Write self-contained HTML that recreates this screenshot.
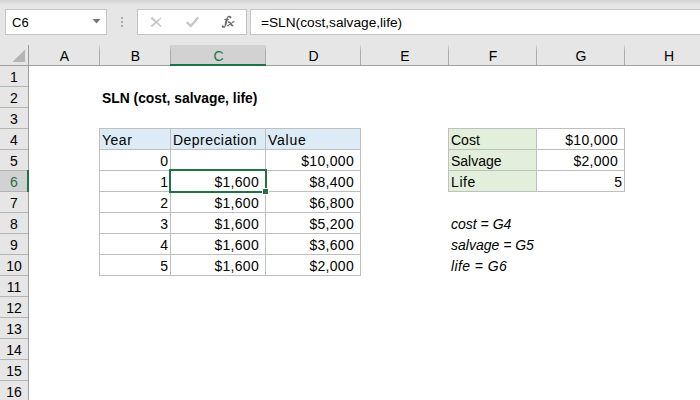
<!DOCTYPE html><html><head><meta charset="utf-8"><style>
*{margin:0;padding:0;box-sizing:border-box}
html,body{width:700px;height:400px;overflow:hidden;background:#fff}
body{position:relative;font-family:"Liberation Sans",sans-serif;font-size:14px;color:#000}
.a{position:absolute}
.t{position:absolute;height:21px;line-height:21px;white-space:nowrap}
.r{text-align:right}
.c{text-align:center}
</style></head><body>

<div class="a" style="left:0;top:0;width:700px;height:45px;background:#e6e6e6"></div>
<div class="a" style="left:0;top:0;width:700px;height:5px;background:linear-gradient(#d3d3d3,#e6e6e6)"></div>
<div class="a" style="left:5px;top:9px;width:102px;height:26px;border:1px solid #c6c6c6;background:#fff"></div>
<div class="t" style="left:12px;top:12px;font-size:13px;color:#000">C6</div>
<svg class="a" style="left:0;top:0" width="700" height="45"><polygon points="92.5,19 100.5,19 96.5,23.5" fill="#757575"/><rect x="121" y="17" width="2" height="2" fill="#a9a9a9"/><rect x="121" y="21" width="2" height="2" fill="#a9a9a9"/><rect x="121" y="25" width="2" height="2" fill="#a9a9a9"/></svg>
<div class="a" style="left:137px;top:9px;width:110px;height:26px;border:1px solid #c6c6c6;background:#fff"></div>
<svg class="a" style="left:0;top:0" width="700" height="45"><polygon points="150.6,18.6 152.2,16.8 161.6,25.9 160.6,27" fill="#c8c8c8"/><polygon points="160.6,17.5 161.4,18.5 152.2,27.1 150.4,25.7" fill="#c8c8c8"/><path d="M186.8 22.2 L190.8 26 L198.2 17.4" stroke="#c8c8c8" stroke-width="2.4" fill="none"/><path d="M230.7 17.3 C230 15.8 227.8 15.8 227.1 18.4 L225.3 25.3 C224.8 27.3 223.4 27.7 222.3 26.5" stroke="#6a6a6a" stroke-width="1.2" fill="none"/><path d="M226.95 18.8 L225.45 24.8" stroke="#6a6a6a" stroke-width="1.8" fill="none"/><circle cx="230.4" cy="17.5" r="1" fill="#6a6a6a"/><circle cx="222.7" cy="26.3" r="1" fill="#6a6a6a"/><path d="M224.3 19.5 L228.9 19.5" stroke="#6a6a6a" stroke-width="1.2"/><path d="M227.9 22.1 C229.4 21.7 230.1 22.4 230.7 23.7 L231.2 24.7 C231.6 25.5 232.4 25.8 233.3 25.3" stroke="#6a6a6a" stroke-width="1.6" fill="none"/><path d="M233.6 21.9 L227.8 25.6 M226.9 25.7 L229 25.7 M232.4 21.8 L234.5 21.8" stroke="#6a6a6a" stroke-width="1" fill="none"/></svg>
<div class="a" style="left:250px;top:9px;width:460px;height:26px;border:1px solid #c6c6c6;background:#fff"></div>
<div class="t" style="left:261px;top:12px;font-size:13.7px;color:#000">=SLN(cost,salvage,life)</div>
<div class="a" style="left:0;top:45px;width:700px;height:20px;background:#e6e6e6"></div>
<div class="a" style="left:170px;top:45px;width:96px;height:21px;background:#d2d2d2"></div>
<svg class="a" style="left:0;top:0" width="700" height="400"><defs><linearGradient id="sg" x1="0" y1="0" x2="0" y2="1"><stop offset="0" stop-color="#d8d8d8"/><stop offset="0.3" stop-color="#ababab"/><stop offset="1" stop-color="#ababab"/></linearGradient></defs><polygon points="25,49.5 25,62 12.5,62" fill="#b5b5b5"/><rect x="99" y="45" width="1" height="20" fill="url(#sg)"/><rect x="170" y="45" width="1" height="20" fill="url(#sg)"/><rect x="265" y="45" width="1" height="20" fill="url(#sg)"/><rect x="360" y="45" width="1" height="20" fill="url(#sg)"/><rect x="448" y="45" width="1" height="20" fill="url(#sg)"/><rect x="536" y="45" width="1" height="20" fill="url(#sg)"/><rect x="624" y="45" width="1" height="20" fill="url(#sg)"/><rect x="0" y="65" width="700" height="1" fill="#9e9e9e"/><rect x="170" y="64" width="96" height="2" fill="#217346"/><rect x="0" y="66" width="28" height="334" fill="#e6e6e6"/><rect x="0" y="170" width="28" height="21" fill="#d2d2d2"/><rect x="28" y="45" width="1" height="355" fill="#9e9e9e"/><rect x="0" y="86" width="28" height="1" fill="#b4b4b4"/><rect x="0" y="107" width="28" height="1" fill="#b4b4b4"/><rect x="0" y="128" width="28" height="1" fill="#b4b4b4"/><rect x="0" y="149" width="28" height="1" fill="#b4b4b4"/><rect x="0" y="170" width="28" height="1" fill="#b4b4b4"/><rect x="0" y="191" width="28" height="1" fill="#b4b4b4"/><rect x="0" y="212" width="28" height="1" fill="#b4b4b4"/><rect x="0" y="233" width="28" height="1" fill="#b4b4b4"/><rect x="0" y="254" width="28" height="1" fill="#b4b4b4"/><rect x="0" y="275" width="28" height="1" fill="#b4b4b4"/><rect x="0" y="296" width="28" height="1" fill="#b4b4b4"/><rect x="0" y="317" width="28" height="1" fill="#b4b4b4"/><rect x="0" y="338" width="28" height="1" fill="#b4b4b4"/><rect x="0" y="359" width="28" height="1" fill="#b4b4b4"/><rect x="0" y="380" width="28" height="1" fill="#b4b4b4"/><rect x="0" y="401" width="28" height="1" fill="#b4b4b4"/><rect x="27" y="170" width="2" height="22" fill="#217346"/></svg>
<div class="t c" style="left:29px;top:46px;width:71px;color:#000">A</div>
<div class="t c" style="left:100px;top:46px;width:71px;color:#000">B</div>
<div class="t c" style="left:171px;top:46px;width:95px;color:#217346">C</div>
<div class="t c" style="left:266px;top:46px;width:95px;color:#000">D</div>
<div class="t c" style="left:361px;top:46px;width:88px;color:#000">E</div>
<div class="t c" style="left:449px;top:46px;width:88px;color:#000">F</div>
<div class="t c" style="left:537px;top:46px;width:88px;color:#000">G</div>
<div class="t c" style="left:625px;top:46px;width:88px;color:#000">H</div>
<div class="t c" style="left:0;top:67px;width:28px;color:#000">1</div>
<div class="t c" style="left:0;top:88px;width:28px;color:#000">2</div>
<div class="t c" style="left:0;top:109px;width:28px;color:#000">3</div>
<div class="t c" style="left:0;top:130px;width:28px;color:#000">4</div>
<div class="t c" style="left:0;top:151px;width:28px;color:#000">5</div>
<div class="t c" style="left:0;top:172px;width:28px;color:#217346">6</div>
<div class="t c" style="left:0;top:193px;width:28px;color:#000">7</div>
<div class="t c" style="left:0;top:214px;width:28px;color:#000">8</div>
<div class="t c" style="left:0;top:235px;width:28px;color:#000">9</div>
<div class="t c" style="left:0;top:256px;width:28px;color:#000">10</div>
<div class="t c" style="left:0;top:277px;width:28px;color:#000">11</div>
<div class="t c" style="left:0;top:298px;width:28px;color:#000">12</div>
<div class="t c" style="left:0;top:319px;width:28px;color:#000">13</div>
<div class="t c" style="left:0;top:340px;width:28px;color:#000">14</div>
<div class="t c" style="left:0;top:361px;width:28px;color:#000">15</div>
<div class="t c" style="left:0;top:382px;width:28px;color:#000">16</div>
<div class="t" style="left:102px;top:88px;font-weight:bold;font-size:13.85px">SLN (cost, salvage, life)</div>
<div class="a" style="left:99px;top:128px;width:262px;height:22px;background:#ddebf7"></div>
<div class="a" style="left:448px;top:128px;width:89px;height:64px;background:#e2efda"></div>
<svg class="a" style="left:0;top:0" width="700" height="400"><rect x="99" y="128" width="1" height="148" fill="#bfbfbf"/><rect x="170" y="128" width="1" height="148" fill="#bfbfbf"/><rect x="265" y="128" width="1" height="148" fill="#bfbfbf"/><rect x="360" y="128" width="1" height="148" fill="#bfbfbf"/><rect x="99" y="128" width="262" height="1" fill="#bfbfbf"/><rect x="99" y="149" width="262" height="1" fill="#bfbfbf"/><rect x="99" y="170" width="262" height="1" fill="#bfbfbf"/><rect x="99" y="191" width="262" height="1" fill="#bfbfbf"/><rect x="99" y="212" width="262" height="1" fill="#bfbfbf"/><rect x="99" y="233" width="262" height="1" fill="#bfbfbf"/><rect x="99" y="254" width="262" height="1" fill="#bfbfbf"/><rect x="99" y="275" width="262" height="1" fill="#bfbfbf"/><rect x="448" y="128" width="1" height="64" fill="#bfbfbf"/><rect x="536" y="128" width="1" height="64" fill="#bfbfbf"/><rect x="624" y="128" width="1" height="64" fill="#bfbfbf"/><rect x="448" y="128" width="177" height="1" fill="#bfbfbf"/><rect x="448" y="149" width="177" height="1" fill="#bfbfbf"/><rect x="448" y="170" width="177" height="1" fill="#bfbfbf"/><rect x="448" y="191" width="177" height="1" fill="#bfbfbf"/><rect x="170" y="170" width="96" height="22" fill="none" stroke="#217346" stroke-width="2"/><rect x="262" y="188" width="7" height="7" fill="#fff"/><rect x="263" y="189" width="5" height="5" fill="#217346"/></svg>
<div class="t" style="left:102px;top:130px;letter-spacing:0.5px">Year</div>
<div class="t" style="left:173px;top:130px;letter-spacing:0.45px">Depreciation</div>
<div class="t" style="left:268px;top:130px;letter-spacing:0.75px">Value</div>
<div class="t r" style="left:99px;top:151px;width:69px;">0</div>
<div class="t r" style="left:265px;top:151px;width:89px;letter-spacing:0.3px">$10,000</div>
<div class="t r" style="left:99px;top:172px;width:69px;">1</div>
<div class="t r" style="left:170px;top:172px;width:89px;letter-spacing:0.3px">$1,600</div>
<div class="t r" style="left:265px;top:172px;width:89px;letter-spacing:0.3px">$8,400</div>
<div class="t r" style="left:99px;top:193px;width:69px;">2</div>
<div class="t r" style="left:170px;top:193px;width:89px;letter-spacing:0.3px">$1,600</div>
<div class="t r" style="left:265px;top:193px;width:89px;letter-spacing:0.3px">$6,800</div>
<div class="t r" style="left:99px;top:214px;width:69px;">3</div>
<div class="t r" style="left:170px;top:214px;width:89px;letter-spacing:0.3px">$1,600</div>
<div class="t r" style="left:265px;top:214px;width:89px;letter-spacing:0.3px">$5,200</div>
<div class="t r" style="left:99px;top:235px;width:69px;">4</div>
<div class="t r" style="left:170px;top:235px;width:89px;letter-spacing:0.3px">$1,600</div>
<div class="t r" style="left:265px;top:235px;width:89px;letter-spacing:0.3px">$3,600</div>
<div class="t r" style="left:99px;top:256px;width:69px;">5</div>
<div class="t r" style="left:170px;top:256px;width:89px;letter-spacing:0.3px">$1,600</div>
<div class="t r" style="left:265px;top:256px;width:89px;letter-spacing:0.3px">$2,000</div>
<div class="t" style="left:451px;top:130px;">Cost</div>
<div class="t" style="left:451px;top:151px;">Salvage</div>
<div class="t" style="left:451px;top:172px;letter-spacing:0.6px">Life</div>
<div class="t r" style="left:536px;top:130px;width:82px;letter-spacing:0.3px">$10,000</div>
<div class="t r" style="left:536px;top:151px;width:82px;letter-spacing:0.3px">$2,000</div>
<div class="t r" style="left:536px;top:172px;width:86px;">5</div>
<div class="t" style="left:451px;top:214px;font-style:italic">cost = G4</div>
<div class="t" style="left:451px;top:235px;font-style:italic">salvage = G5</div>
<div class="t" style="left:451px;top:256px;font-style:italic;letter-spacing:0.4px">life = G6</div>
</body></html>
